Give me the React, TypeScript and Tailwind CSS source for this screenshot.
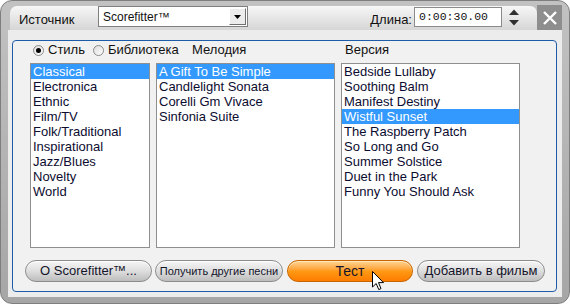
import { ReactNode } from 'react'

const genres = ['Classical', 'Electronica', 'Ethnic', 'Film/TV', 'Folk/Traditional', 'Inspirational', 'Jazz/Blues', 'Novelty', 'World']
const melodies = ['A Gift To Be Simple', 'Candlelight Sonata', 'Corelli Gm Vivace', 'Sinfonia Suite']
const versions = [
    'Bedside Lullaby',
    'Soothing Balm',
    'Manifest Destiny',
    'Wistful Sunset',
    'The Raspberry Patch',
    'So Long and Go',
    'Summer Solstice',
    'Duet in the Park',
    'Funny You Should Ask',
]

function ListBox({ items, selected, width }: { items: string[]; selected: number; width: string }) {
    return (
        <div className={`${width} h-[185px] border border-[#8f8f8f] bg-white`}>
            {items.map((item, i) => (
                <div
                    key={item}
                    className={`h-[15px] pl-[2px] text-[13px] leading-[15px] whitespace-nowrap ${
                        i === selected ? 'bg-[#3399ff] text-white' : 'text-[#0c0c30]'
                    }`}
                >
                    {item}
                </div>
            ))}
        </div>
    )
}

function Radio({ checked }: { checked?: boolean }) {
    return (
        <div className="w-[11px] h-[11px] rounded-full border border-[#8a8a8a] bg-gradient-to-br from-[#dcdcdc] to-white flex items-center justify-center">
            {checked && <div className="w-[5px] h-[5px] rounded-full bg-black" />}
        </div>
    )
}

function PillButton({ width, children, orange, textSize = 'text-[13px]' }: { width: string; children: ReactNode; orange?: boolean; textSize?: string }) {
    return (
        <div
            className={`${width} h-[22px] rounded-full flex items-center justify-center ${textSize} text-[#14142a] whitespace-nowrap ${
                orange
                    ? 'border border-[#c86400] bg-gradient-to-b from-[#ffd590] via-[#ff9a14] to-[#ff7c00] shadow-[inset_0_1px_0_#ffe8c0]'
                    : 'border border-[#8c8c8c] bg-gradient-to-b from-[#f6f6f6] via-[#dedede] to-[#bdbdbd] shadow-[inset_0_1px_0_#ffffff]'
            }`}
        >
            {children}
        </div>
    )
}

export default function App() {
    return (
        <div className="relative w-[570px] h-[304px] bg-white font-['Liberation_Sans',Arial,sans-serif]">
            <div className="h-full rounded-[12px] border border-[#7e7e7e] bg-gradient-to-b from-[#c2c2c2] to-[#a6a6a6] px-[7px] pb-[6px] flex flex-col">
                {/* header */}
                <div className="h-[29px] flex items-end">
                    <div className="ml-[2px] flex-1 h-[24px] rounded-t-[7px] bg-gradient-to-b from-[#f7f7f7] to-[#d6d6d6] flex items-start text-[13px] text-[#111]">
                        <span className="ml-[9px] mt-[4px] w-[79px]">Источник</span>
                        <div className="w-[150px] h-[21px] border border-[#7f7f7f] bg-white flex items-center justify-between pl-[4px] pr-[1px]">
                            <span className="text-[12px]">Scorefitter™</span>
                            <div className="w-[17px] h-[17px] bg-[#ececec] border border-t-white border-l-white border-b-[#707070] border-r-[#707070] flex items-center justify-center">
                                <svg width="7" height="4" viewBox="0 0 7 4">
                                    <path d="M0 0 L7 0 L3.5 4 Z" fill="#000" />
                                </svg>
                            </div>
                        </div>
                        <div className="flex-1" />
                        <span className="mt-[4px]">Длина:</span>
                        <div className="ml-[2px] mt-[1px] w-[88px] h-[20px] border border-[#8a8a8a] bg-white flex items-center pl-[4px] font-['Liberation_Mono',monospace] text-[11.5px]">
                            0:00:30.00
                        </div>
                        <svg className="ml-[6px] mt-[3px]" width="12" height="18" viewBox="0 0 12 18">
                            <path d="M1 6 L6 0.5 L11 6 Z" fill="#303030" />
                            <path d="M1 11 L6 16.5 L11 11 Z" fill="#303030" />
                        </svg>
                        <div className="w-[17px]" />
                    </div>
                    <div className="w-[25px] h-[25px] bg-[#8e8e8e] flex items-center justify-center">
                        <svg width="14" height="14" viewBox="0 0 14 14">
                            <path d="M1 1 L13 13 M13 1 L1 13" stroke="#fff" strokeWidth="2.4" />
                        </svg>
                    </div>
                </div>

                {/* body */}
                <div className="flex-1 bg-[#ececec] pt-[10px] pl-[4px] pr-[5px] pb-[5px]">
                    <div className="h-full rounded-[4px] border border-[#1d5ca8] bg-[#f1f1f1] pt-[1px] text-[13px]">
                        <div className="h-[16px] flex items-center text-[#111]">
                            <div className="w-[179px] flex items-center">
                                <div className="ml-[20px]"><Radio checked /></div>
                                <span className="ml-[4px]">Стиль</span>
                                <div className="ml-[8px]"><Radio /></div>
                                <span className="ml-[4px]">Библиотека</span>
                            </div>
                            <span className="w-[153px]">Мелодия</span>
                            <span>Версия</span>
                        </div>
                        <div className="mt-[5px] pl-[17px] flex gap-[6px]">
                            <ListBox items={genres} selected={0} width="w-[120px]" />
                            <ListBox items={melodies} selected={0} width="w-[179px]" />
                            <ListBox items={versions} selected={3} width="w-[179px]" />
                        </div>
                        <div className="mt-[12px] pl-[12px] flex">
                            <PillButton width="w-[127px]">О Scorefitter™...</PillButton>
                            <div className="ml-[3px]">
                                <PillButton width="w-[128px]" textSize="text-[11px]">Получить другие песни</PillButton>
                            </div>
                            <div className="ml-[4px]">
                                <PillButton width="w-[126px]" orange textSize="text-[14px]">Тест</PillButton>
                            </div>
                            <div className="ml-[4px]">
                                <PillButton width="w-[128px]">Добавить в фильм</PillButton>
                            </div>
                        </div>
                    </div>
                </div>
            </div>

            {/* mouse cursor */}
            <svg className="absolute left-[372px] top-[271px]" width="13" height="20" viewBox="0 0 13 20">
                <path d="M0.5 0.5 L0.5 16 L4.2 12.5 L6.8 18.6 L9 17.6 L6.5 11.6 L11.5 11.6 Z" fill="#fff" stroke="#000" strokeWidth="1" strokeLinejoin="round" />
            </svg>
        </div>
    )
}
